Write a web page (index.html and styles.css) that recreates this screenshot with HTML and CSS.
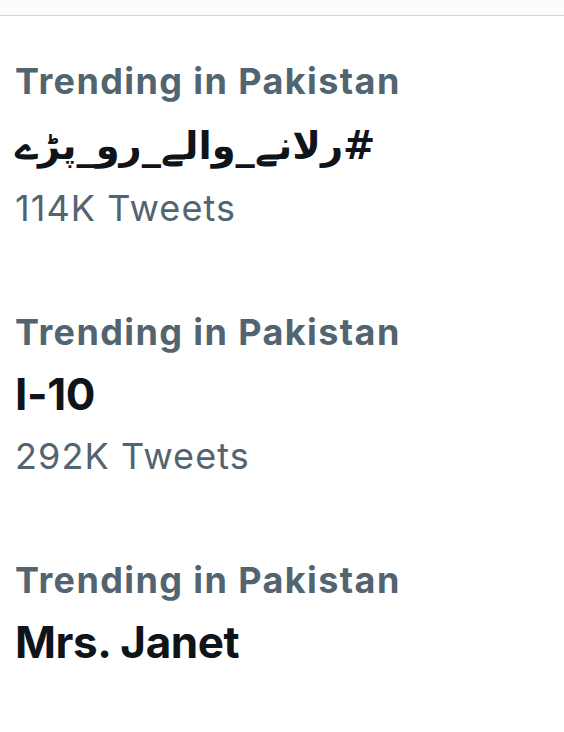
FILE: index.html
```html
<!DOCTYPE html>
<html lang="en">
<head>
<meta charset="utf-8">
<link rel="stylesheet" href="styles.css">
</head>
<body>
<div class="topbar"></div>
<div class="list">
  <div class="trend">
    <div class="meta">Trending in Pakistan</div>
    <div class="title"><span dir="rtl" class="urdu">#رلانے_والے_رو_پڑے</span></div>
    <div class="count">114K Tweets</div>
  </div>
  <div class="trend">
    <div class="meta">Trending in Pakistan</div>
    <div class="title">I-10</div>
    <div class="count">292K Tweets</div>
  </div>
  <div class="trend">
    <div class="meta">Trending in Pakistan</div>
    <div class="title">Mrs. Janet</div>
  </div>
</div>
</body>
</html>
```
FILE: styles.css
```css
html, body {
  margin: 0;
  padding: 0;
  background: #ffffff;
}
body {
  width: 564px;
  height: 732px;
  overflow: hidden;
  font-family: "Inter", "Liberation Sans", sans-serif;
}
.topbar {
  height: 15px;
  background: #fbfbfb;
  border-bottom: 1px solid #d3d3d3;
}
.list {
  display: flex;
  flex-direction: column;
  padding: 34px 0 0 15px;
  gap: 62px;
}
.trend {
  display: flex;
  flex-direction: column;
}
.meta {
  color: #536471;
  font-size: 36px;
  font-weight: 700;
  line-height: 62px;
  letter-spacing: 1.4px;
}
.title {
  color: #0f1419;
  font-size: 44px;
  font-weight: 700;
  line-height: 62px;
  letter-spacing: -0.4px;
}
.urdu {
  font-family: "DejaVu Sans", sans-serif;
  font-size: 38.5px;
  font-weight: 700;
  letter-spacing: 0;
}
.count {
  color: #536471;
  font-size: 36px;
  font-weight: 400;
  line-height: 62px;
  letter-spacing: 1.1px;
}
```
